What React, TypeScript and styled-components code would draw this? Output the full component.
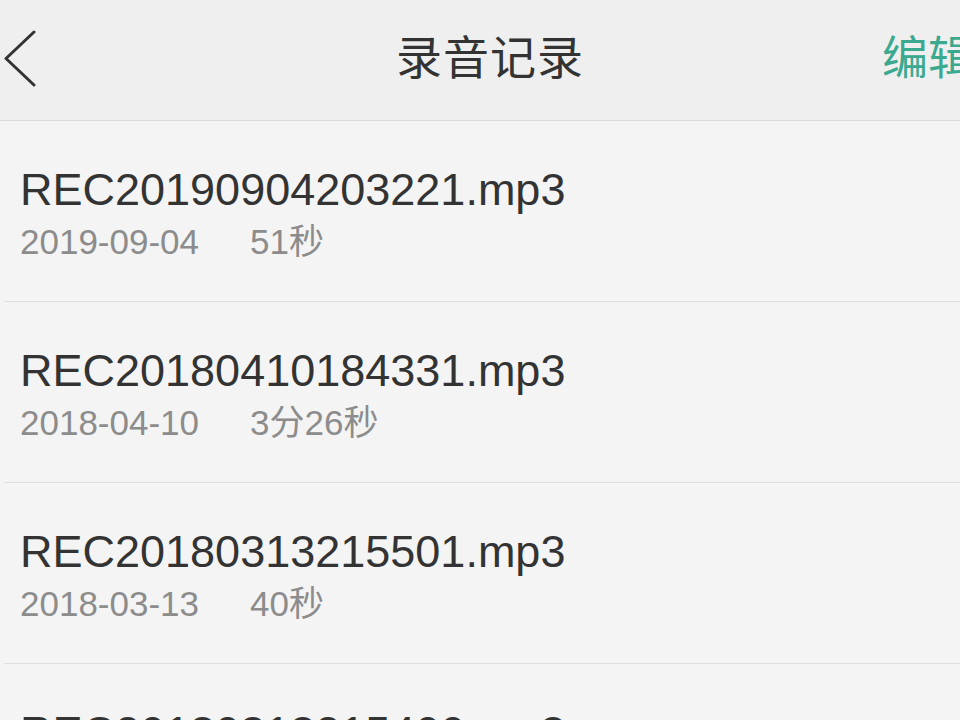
import styled, { createGlobalStyle } from "styled-components";

const GlobalStyle = createGlobalStyle`
  html, body {
    margin: 0;
    padding: 0;
    background: #f4f4f4;
  }
  body {
    font-family: "Liberation Sans", "Noto Sans CJK SC", sans-serif;
  }
`;

const Screen = styled.div`
  width: 960px;
  height: 720px;
  overflow: hidden;
  background: #f4f4f4;
`;

const Header = styled.header`
  height: 120px;
  border-bottom: 1px solid #dadada;
  background: #efefef;
  padding-left: 20px;
  display: grid;
  grid-template-columns: 1fr auto 1fr;
  align-items: center;
  overflow: hidden;
`;

const BackButton = styled.button`
  justify-self: start;
  margin: 0 0 2px -20px;
  width: 40px;
  height: 60px;
  padding: 0;
  border: none;
  background: transparent;
  display: flex;
  align-items: center;
  justify-content: center;
`;

const Title = styled.h1`
  margin: 0 0 12px 0;
  font-family: "Noto Sans CJK SC", sans-serif;
  font-size: 46px;
  font-weight: 400;
  color: #333333;
  letter-spacing: 1px;
`;

const EditButton = styled.span`
  justify-self: end;
  margin-right: -14px;
  margin-bottom: 12px;
  font-family: "Noto Sans CJK SC", sans-serif;
  font-size: 46px;
  color: #3aa98f;
  white-space: nowrap;
`;

const List = styled.ul`
  list-style: none;
  margin: 0;
  padding: 0 0 0 4px;
`;

const Row = styled.li`
  height: 181px;
  box-sizing: border-box;
  border-bottom: 1px solid #dedede;
  padding: 43px 0 0 16px;
`;

const FileName = styled.div`
  font-size: 45px;
  line-height: 52px;
  color: #333333;
  white-space: nowrap;
`;

const Meta = styled.div`
  margin-top: 6px;
  display: flex;
  font-size: 35px;
  line-height: 40px;
  color: #8c8c8c;
`;

const DateText = styled.span`
  width: 230px;
`;

const Duration = styled.span``;

const records = [
  { name: "REC20190904203221.mp3", date: "2019-09-04", duration: "51秒" },
  { name: "REC20180410184331.mp3", date: "2018-04-10", duration: "3分26秒" },
  { name: "REC20180313215501.mp3", date: "2018-03-13", duration: "40秒" },
  { name: "REC20180313215400.mp3", date: "2018-03-13", duration: "1分02秒" },
];

const ChevronLeft = () => (
  <svg width="34" height="58" viewBox="0 0 34 58" fill="none">
    <path
      d="M31 2 L3 28.5 L31 55"
      stroke="#333333"
      strokeWidth="3"
      strokeLinecap="round"
      strokeLinejoin="round"
    />
  </svg>
);

const App = () => {
  return (
    <Screen>
      <GlobalStyle />
      <Header>
        <BackButton>
          <ChevronLeft />
        </BackButton>
        <Title>录音记录</Title>
        <EditButton>编辑</EditButton>
      </Header>
      <List>
        {records.map((record) => (
          <Row key={record.name}>
            <FileName>{record.name}</FileName>
            <Meta>
              <DateText>{record.date}</DateText>
              <Duration>{record.duration}</Duration>
            </Meta>
          </Row>
        ))}
      </List>
    </Screen>
  );
};

export default App;
